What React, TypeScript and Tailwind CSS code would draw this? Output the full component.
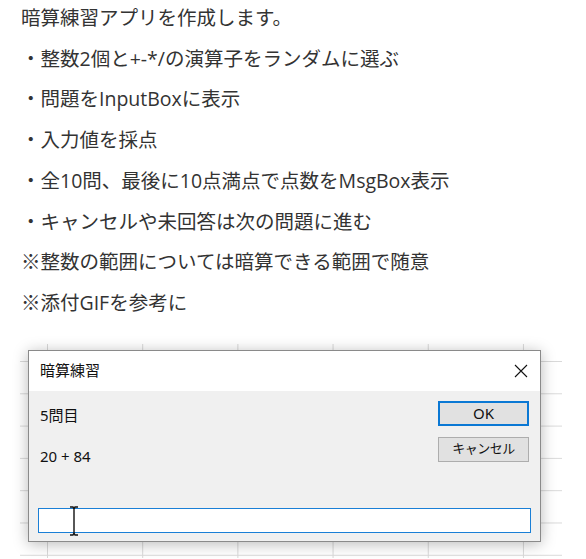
import React from "react";

const lines = [
  "暗算練習アプリを作成します。",
  "・整数2個と+-*/の演算子をランダムに選ぶ",
  "・問題をInputBoxに表示",
  "・入力値を採点",
  "・全10問、最後に10点満点で点数をMsgBox表示",
  "・キャンセルや未回答は次の問題に進む",
  "※整数の範囲については暗算できる範囲で随意",
  "※添付GIFを参考に",
];

export default function App() {
  return (
    <div className="w-[586px] h-[559px] bg-white overflow-hidden relative">
      <div
        className="pl-[21px] -mt-[2px] text-[19.5px] leading-[40.7px] text-[#333333]"
        style={{ fontFamily: '"Open Sans", "Noto Sans CJK JP", sans-serif' }}
      >
        {lines.map((l, i) => (
          <div key={i} className="whitespace-nowrap">
            {l}
          </div>
        ))}
      </div>

      {/* spreadsheet background */}
      <div className="ml-[20px] mt-[20px] w-[542px] h-[214px] relative bg-white bg-[linear-gradient(to_right,#d9d9d9_1px,transparent_1px),linear-gradient(to_bottom,#d9d9d9_1px,transparent_1px)] bg-[size:95.2px_32.3px] bg-[position:27px_17px]">
        {/* dialog */}
        <div
          className="absolute left-[8px] top-[6px] w-[513px] h-[192px] border border-[#8a8a8a] bg-[#f0f0f0] flex flex-col shadow-[0_2px_14px_rgba(0,0,0,0.28)]"
          style={{ fontFamily: '"Noto Sans", "Noto Sans CJK JP", sans-serif' }}
        >
          <div className="h-[40px] bg-white flex items-center justify-between pl-[11px] pr-[12px] shrink-0">
            <span className="text-[15px] text-[#111]">暗算練習</span>
            <svg width="14" height="14" viewBox="0 0 14 14">
              <path d="M1 1 L13 13 M13 1 L1 13" stroke="#111" strokeWidth="1.1" />
            </svg>
          </div>
          <div className="flex-1 flex flex-col">
            <div className="flex justify-between pt-[10px] pl-[11px] pr-[11px]">
              <div className="text-[15px] text-[#111] leading-[20px]">
                <div className="mt-[4px]">5問目</div>
                <div className="mt-[21px]">20 + 84</div>
              </div>
              <div className="flex flex-col gap-[11px]">
                <div className="w-[91px] h-[25px] border-2 border-[#0a78d4] bg-[#e1e1e1] flex items-center justify-center text-[15px] text-[#111]">
                  OK
                </div>
                <div className="w-[91px] h-[25px] border border-[#adadad] bg-[#e1e1e1] flex items-center justify-center text-[13px] text-[#111] tracking-[-0.5px]">
                  キャンセル
                </div>
              </div>
            </div>
            <div className="mt-auto px-[9px] pb-[8px] relative">
              <div className="h-[25px] border-[1.5px] border-[#1a7fd6] bg-white" />
              <svg
                width="10"
                height="30"
                viewBox="0 0 10 30"
                className="absolute left-[40px] -top-[2px]"
              >
                <path
                  d="M1 1 L4 1 L5 3 L6 1 L9 1 M5 3 L5 27 M1 29 L4 29 L5 27 L6 29 L9 29"
                  stroke="#111"
                  strokeWidth="1.4"
                  fill="none"
                />
              </svg>
            </div>
          </div>
        </div>
      </div>
    </div>
  );
}
